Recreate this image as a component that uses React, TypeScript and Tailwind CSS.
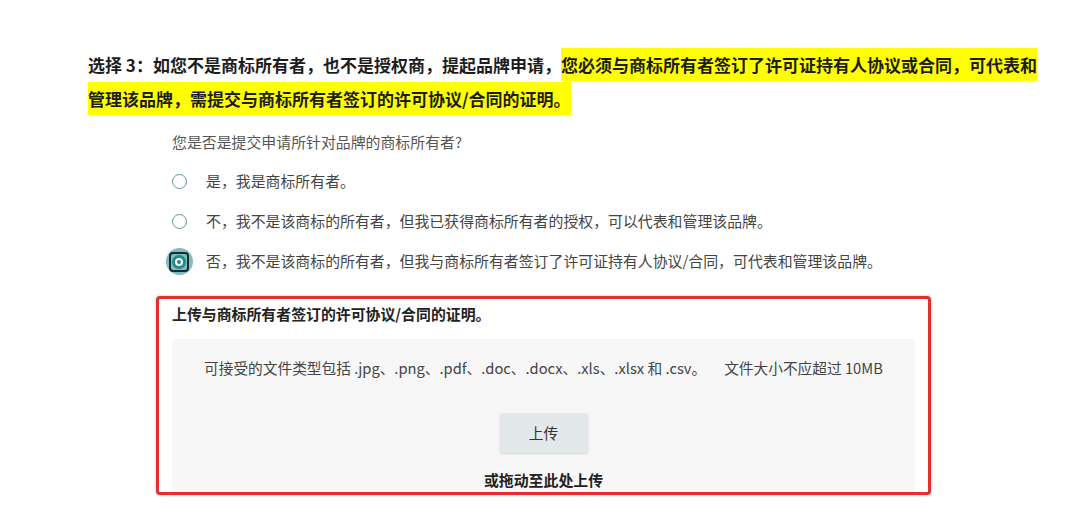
import React from "react";

const font = { fontFamily: '"Noto Sans CJK SC", "Noto Sans", sans-serif' };

function Radio({ selected }: { selected?: boolean }) {
  if (selected) {
    return (
      <div className="w-[14px] h-[14px] flex items-center justify-center shrink-0">
        <div className="w-[27px] h-[27px] shrink-0 rounded-full bg-[#84bcbd] flex items-center justify-center">
          <div className="w-[20px] h-[20px] shrink-0 rounded-[4px] border-2 border-[#1c2a33] flex items-center justify-center">
            <div className="w-[14px] h-[14px] rounded-full bg-[#1f8a8c] flex items-center justify-center">
              <div className="w-[8px] h-[8px] rounded-full bg-white flex items-center justify-center">
                <div className="w-[4px] h-[4px] rounded-full bg-[#1f8a8c]" />
              </div>
            </div>
          </div>
        </div>
      </div>
    );
  }
  return <div className="w-[15px] h-[15px] shrink-0 rounded-full border-[1.5px] border-[#5d9499] bg-white" />;
}

export default function App() {
  return (
    <div className="w-[1080px] h-[529px] bg-white overflow-hidden" style={font}>
      <div className="pt-[48px] pl-[88px] w-[1046px] text-[17px] leading-[34px] font-bold text-[#1d1d1d]">
        选择 3：如您不是商标所有者，也不是授权商，提起品牌申请，
        <span className="bg-[#ffff00] py-[4px] box-decoration-clone">
          您必须与商标所有者签订了许可证持有人协议或合同，可代表和管理该品牌，需提交与商标所有者签订的许可协议/合同的证明。
        </span>
      </div>

      <div className="pl-[172px] mt-[16px] text-[14.9px] leading-[20px] text-[#555]">
        您是否是提交申请所针对品牌的商标所有者?
      </div>

      <div className="pl-[172px] mt-[9px] text-[14.9px] text-[#444]">
        <div className="h-[40px] flex items-center gap-[19px]">
          <Radio />
          <span>是，我是商标所有者。</span>
        </div>
        <div className="h-[40px] flex items-center gap-[19px]">
          <Radio />
          <span>不，我不是该商标的所有者，但我已获得商标所有者的授权，可以代表和管理该品牌。</span>
        </div>
        <div className="h-[41px] flex items-center gap-[20px]">
          <Radio selected />
          <span>否，我不是该商标的所有者，但我与商标所有者签订了许可证持有人协议/合同，可代表和管理该品牌。</span>
        </div>
      </div>

      <div className="ml-[156px] mt-[14px] w-[775px] h-[199px] border-[3px] border-[#e2302d] rounded-[4px] shadow-[0_0_3px_rgba(0,0,0,0.25)] flex flex-col px-[13px] pt-[5px]">
        <div className="text-[14.9px] leading-[20px] font-bold text-[#222]">
          上传与商标所有者签订的许可协议/合同的证明。
        </div>
        <div className="mt-[15px] flex-1 bg-[#f7f7f7] flex flex-col items-center pt-[19px]">
          <div className="self-start pl-[32px] text-[14.7px] leading-[20px] text-[#444] whitespace-nowrap">
            <span>可接受的文件类型包括 .jpg、.png、.pdf、.doc、.docx、.xls、.xlsx 和 .csv。</span>
            <span className="ml-[18px]">文件大小不应超过 10MB</span>
          </div>
          <div className="mt-[35px] w-[88px] h-[40px] rounded-[3px] bg-[#e3e8ea] shadow-[0_1px_2px_rgba(0,0,0,0.15)] flex items-center justify-center text-[14.7px] text-[#333]">
            上传
          </div>
          <div className="mt-[17px] text-[14.9px] leading-[20px] font-bold text-[#222]">
            或拖动至此处上传
          </div>
        </div>
      </div>
    </div>
  );
}
